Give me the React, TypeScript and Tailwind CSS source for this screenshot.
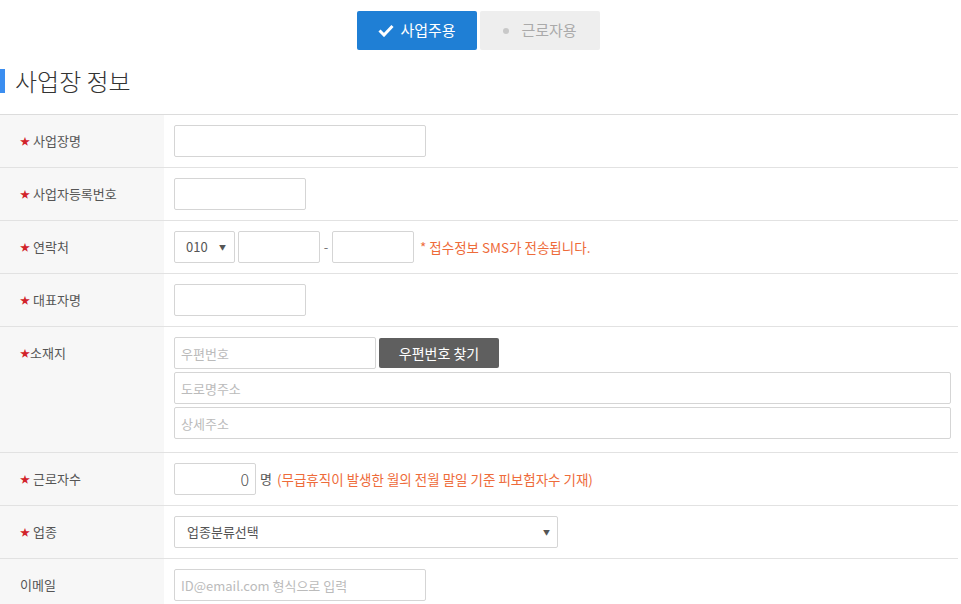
import React from "react";

const font = { fontFamily: '"Noto Sans CJK KR", "Noto Sans", sans-serif' };

function Row({ label, star = true, children }: { label: string; star?: boolean; children: React.ReactNode }) {
  return (
    <div className="flex border-b border-[#e2e2e2]">
      <div className="w-[164px] shrink-0 bg-[#f7f7f7] pl-[20px] pt-[10px] text-[13px] text-[#555] leading-[32px]">
        {star && <span className="text-[#d2232a] mr-[3px] text-[10px] relative top-[-1px]">★</span>}
        {label}
      </div>
      <div className="flex-1 pl-[10px] py-[10px]">{children}</div>
    </div>
  );
}

const inputCls = "h-[32px] border border-[#d5d5d5] rounded-[2px] bg-white px-[6px] text-[13px] text-[#555] placeholder:text-[#bbb] outline-none";

export default function App() {
  return (
    <div className="w-[961px] h-[604px] overflow-hidden bg-white" style={font}>
      <div className="flex justify-center gap-[3px] pt-[11px] pr-[4px]">
        <button className="w-[120px] h-[39px] rounded-[2px] bg-[#1f7fd5] text-white text-[15px] flex items-center justify-center gap-[6px]">
          <svg width="16" height="13" viewBox="0 0 16 13"><path d="M1.5 6.5 L6 11 L14.5 2" stroke="white" strokeWidth="3" fill="none" /></svg>
          사업주용
        </button>
        <button className="w-[120px] h-[39px] rounded-[2px] bg-[#eeeeee] text-[#aaa] text-[15px] flex items-center justify-center gap-[12px]">
          <span className="w-[6px] h-[6px] rounded-full bg-[#c8c8c8]" />
          근로자용
        </button>
      </div>
      <div className="flex items-center h-[24px] mt-[19px] mb-[21px]">
        <div className="w-[5px] h-[24px] bg-[#3b8ef0]" />
        <div className="ml-[10px] text-[24px] text-[#333] leading-none font-light">사업장 정보</div>
      </div>
      <div className="w-[958px] border-t border-[#dcdcdc]">
        <Row label="사업장명">
          <input className={`${inputCls} w-[252px]`} />
        </Row>
        <Row label="사업자등록번호">
          <input className={`${inputCls} w-[132px]`} />
        </Row>
        <Row label="연락처">
          <div className="flex items-center">
            <div className={`${inputCls} w-[61px] flex items-center justify-between pl-[11px] pr-[8px] text-[#444]`}>
              <span>010</span>
              <span className="text-[7px] text-[#555]">▼</span>
            </div>
            <input className={`${inputCls} w-[82px] ml-[3px]`} />
            <span className="mx-[3px] text-[13px] text-[#777] w-[6px] text-center">-</span>
            <input className={`${inputCls} w-[82px]`} />
            <span className="ml-[6px] text-[13.5px] text-[#ee6b3a]">* 접수정보 SMS가 전송됩니다.</span>
          </div>
        </Row>
        <Row label="대표자명">
          <input className={`${inputCls} w-[132px]`} />
        </Row>
        <div className="flex border-b border-[#e2e2e2]">
          <div className="w-[164px] shrink-0 bg-[#f7f7f7] pl-[20px] pt-[10px] text-[13px] text-[#555] leading-[32px]">
            <span className="text-[#d2232a] text-[10px] relative top-[-1px]">★</span>소재지
          </div>
          <div className="flex-1 pl-[10px] pt-[10px] pb-[13px] pr-[7px] flex flex-col gap-[3px]">
            <div className="flex items-center gap-[3px]">
              <input className={`${inputCls} w-[202px]`} placeholder="우편번호" />
              <button className="w-[120px] h-[30px] rounded-[2px] bg-[#5f5f5f] text-white text-[14px]">우편번호 찾기</button>
            </div>
            <input className={`${inputCls} w-full`} placeholder="도로명주소" />
            <input className={`${inputCls} w-full`} placeholder="상세주소" />
          </div>
        </div>
        <Row label="근로자수">
          <div className="flex items-center">
            <input className={`${inputCls} w-[82px] text-right text-[16px] font-light`} defaultValue="0" />
            <span className="ml-[4px] text-[13px] text-[#555]">명</span>
            <span className="ml-[5px] text-[13.5px] text-[#ee6b3a]">(무급휴직이 발생한 월의 전월 말일 기준 피보험자수 기재)</span>
          </div>
        </Row>
        <Row label="업종">
          <div className={`${inputCls} w-[384px] flex items-center justify-between pl-[12px] pr-[7px] text-[#444]`}>
            <span>업종분류선택</span>
            <span className="text-[7px] text-[#555]">▼</span>
          </div>
        </Row>
        <Row label="이메일" star={false}>
          <input className={`${inputCls} w-[252px]`} placeholder="ID@email.com 형식으로 입력" />
        </Row>
      </div>
    </div>
  );
}
